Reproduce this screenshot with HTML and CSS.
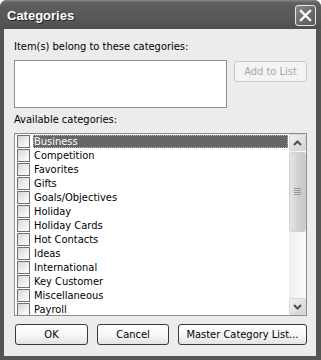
FILE: index.html
```html
<!DOCTYPE html>
<html lang="en">
<head>
    <meta charset="UTF-8">
    <meta name="viewport" content="width=device-width, initial-scale=1.0">
    <title>Categories</title>
    <link rel="stylesheet" href="styles.css">
</head>
<body>

<div class="window">
    <div class="titlebar">
        <span class="title">Categories</span>
        <button type="button" class="close">
            <svg width="13" height="13" viewBox="0 0 13 13">
                <path d="M2 2 L11 11 M11 2 L2 11" stroke="#fff" stroke-width="2.4" stroke-linecap="square"/>
            </svg>
        </button>
    </div>

    <div class="client">
        <label class="caption" for="items">Item(s) belong to these categories:</label>
        <div class="top-row">
            <textarea id="items" class="items"></textarea>
            <button type="button" class="btn add" disabled>Add to List</button>
        </div>

        <label class="caption caption-list">Available categories:</label>
        <div class="listbox">
            <ul class="list">
                <li class="selected"><span class="check"></span><span class="name">Business</span></li>
                <li><span class="check"></span><span class="name">Competition</span></li>
                <li><span class="check"></span><span class="name">Favorites</span></li>
                <li><span class="check"></span><span class="name">Gifts</span></li>
                <li><span class="check"></span><span class="name">Goals/Objectives</span></li>
                <li><span class="check"></span><span class="name">Holiday</span></li>
                <li><span class="check"></span><span class="name">Holiday Cards</span></li>
                <li><span class="check"></span><span class="name">Hot Contacts</span></li>
                <li><span class="check"></span><span class="name">Ideas</span></li>
                <li><span class="check"></span><span class="name">International</span></li>
                <li><span class="check"></span><span class="name">Key Customer</span></li>
                <li><span class="check"></span><span class="name">Miscellaneous</span></li>
                <li><span class="check"></span><span class="name">Payroll</span></li>
            </ul>
            <div class="scrollbar">
                <div class="arrow">
                    <svg width="9" height="6" viewBox="0 0 9 6">
                        <path d="M1 5 L4.5 1.5 L8 5" fill="none" stroke="#4d4d4d" stroke-width="2"/>
                    </svg>
                </div>
                <div class="track">
                    <div class="thumb">
                        <svg width="7" height="8" viewBox="0 0 7 8">
                            <path d="M0 0.5 H7 M0 2.5 H7 M0 4.5 H7 M0 6.5 H7" stroke="#9a9a9a" stroke-width="1"/>
                        </svg>
                    </div>
                </div>
                <div class="arrow">
                    <svg width="9" height="6" viewBox="0 0 9 6">
                        <path d="M1 1 L4.5 4.5 L8 1" fill="none" stroke="#4d4d4d" stroke-width="2"/>
                    </svg>
                </div>
            </div>
        </div>

        <div class="actions">
            <button type="button" class="btn ok">OK</button>
            <button type="button" class="btn cancel">Cancel</button>
            <button type="button" class="btn master">Master Category List...</button>
        </div>
    </div>
</div>

</body>
</html>
```

FILE: styles.css
```css
body {
    margin: 0;
    background: #fff;
    font-family: "DejaVu Sans Condensed", "DejaVu Sans", sans-serif;
    font-size: 11px;
    color: #000;
}
.window {
    width: 321px;
    height: 360px;
    box-sizing: border-box;
    display: flex;
    flex-direction: column;
    background: #555;
    border-radius: 7px 7px 0 0;
    overflow: hidden;
}
.titlebar {
    height: 29px;
    flex: none;
    display: flex;
    align-items: center;
    justify-content: space-between;
    padding: 0 5px 0 7px;
    background: linear-gradient(#8a8a8a 0, #666 2px, #5c5c5c 6px, #575757 20px, #4f4f4f 29px);
}
.title {
    color: #fff;
    font-family: "Liberation Sans", Arial, sans-serif;
    font-size: 13px;
    font-weight: bold;
    text-shadow: 1px 1px 0 #222;
    margin-top: 2px;
}
.close {
    width: 21px;
    height: 21px;
    margin-top: 2px;
    padding: 0;
    display: flex;
    align-items: center;
    justify-content: center;
    border: 1px solid #e8e8e8;
    border-radius: 3px;
    background: linear-gradient(135deg, #8a8a8a, #666 60%, #5a5a5a);
}
.client {
    flex: 1;
    margin: 0 5px 4px 4px;
    padding: 11px 9px 0 10px;
    background: #ececec;
}
.caption {
    display: block;
    line-height: 14px;
    margin-bottom: 6px;
}
.top-row {
    display: flex;
    gap: 7px;
    margin-bottom: 5px;
}
.items {
    width: 213px;
    height: 48px;
    box-sizing: border-box;
    margin: 0;
    border: 1px solid #8c8c8c;
    background: #fff;
    resize: none;
}
.btn {
    height: 21px;
    padding: 0;
    font-family: "DejaVu Sans Condensed", "DejaVu Sans", sans-serif;
    font-size: 11px;
    color: #000;
    border: 1px solid #3a3a3a;
    border-radius: 3px;
    background: linear-gradient(#fff, #f4f4f4 60%, #e2e2e2);
}
.add {
    width: 73px;
    margin-top: 1px;
    color: #a6a6a6;
    border-color: #c8c8c8;
    background: #f4f4f4;
}
.listbox {
    height: 183px;
    box-sizing: border-box;
    display: flex;
    border: 1px solid #8c8c8c;
    background: #fff;
    overflow: hidden;
}
.list {
    flex: 1;
    list-style: none;
    margin: 0;
    padding: 0;
}
.list li {
    height: 14px;
    display: flex;
    align-items: center;
    padding-left: 2px;
}
.check {
    width: 11px;
    height: 11px;
    flex: none;
    border: 1px solid #707070;
    background: linear-gradient(135deg, #d6d6d6, #f4f4f4 70%, #fff);
}
.name {
    flex: 1;
    margin: 0 1px 0 3px;
    padding-left: 1px;
    line-height: 13px;
}
.selected .name {
    height: 11px;
    margin-top: 1px;
    line-height: 11px;
    color: #fff;
    background: #666;
    border: 1px dotted #bbb;
    padding-left: 0;
}
.scrollbar {
    width: 17px;
    flex: none;
    display: flex;
    flex-direction: column;
    background: linear-gradient(90deg, #efefef, #fbfbfb);
}
.arrow {
    height: 17px;
    flex: none;
    display: flex;
    align-items: center;
    justify-content: center;
    box-sizing: border-box;
    border: 1px solid #d8d8d8;
    border-radius: 2px;
    background: linear-gradient(135deg, #f2f2f2, #d2d2d2);
}
.track {
    flex: 1;
    padding-top: 1px;
}
.thumb {
    height: 80px;
    box-sizing: border-box;
    display: flex;
    align-items: center;
    justify-content: center;
    border: 1px solid #d2d2d2;
    border-radius: 2px;
    background: linear-gradient(90deg, #e4e4e4, #d0d0d0 60%, #c8c8c8);
}
.actions {
    display: flex;
    gap: 9px;
    margin-top: 8px;
    padding-left: 1px;
}
.ok {
    width: 73px;
}
.cancel {
    width: 72px;
}
.master {
    width: 129px;
}
```
